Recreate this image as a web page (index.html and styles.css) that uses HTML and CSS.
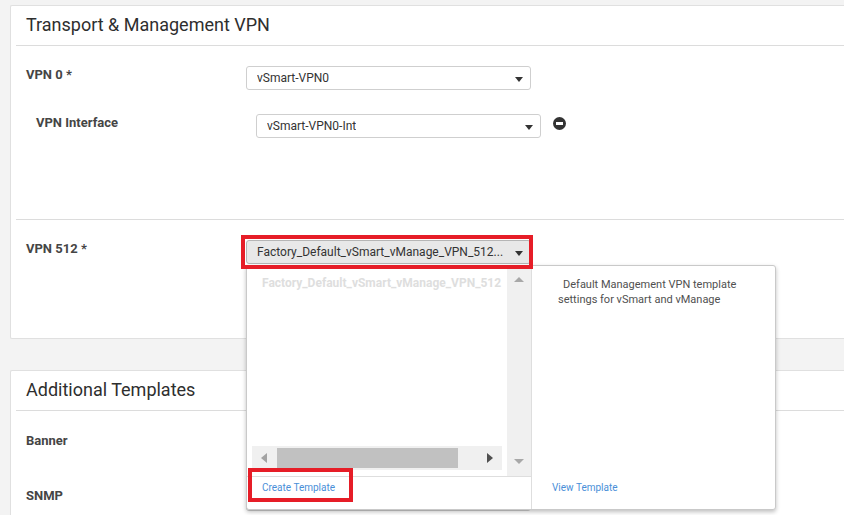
FILE: index.html
```html
<!DOCTYPE html>
<html lang="en">
<head>
<meta charset="utf-8">
<title>Transport &amp; Management VPN</title>
<link rel="stylesheet" href="styles.css">
</head>
<body>
<div class="page">
  <section class="card card-transport">
    <div class="card-head"><h2 class="card-title">Transport &amp; Management VPN</h2></div>
    <div class="card-body card-body-vpn0">
      <div class="field">
        <label class="field-label">VPN 0 *</label>
        <div class="select"><span class="select-value">vSmart-VPN0</span><span class="caret"></span></div>
      </div>
      <div class="field field-sub">
        <label class="field-label">VPN Interface</label>
        <div class="select"><span class="select-value">vSmart-VPN0-Int</span><span class="caret"></span></div>
        <span class="remove-btn"></span>
      </div>
    </div>
    <div class="card-body card-body-vpn512">
      <div class="field">
        <label class="field-label">VPN 512 *</label>
        <div class="select select-open"><span class="select-value">Factory_Default_vSmart_vManage_VPN_512...</span><span class="caret"></span></div>
      </div>
    </div>
  </section>

  <section class="card card-additional">
    <div class="card-head"><h2 class="card-title">Additional Templates</h2></div>
    <div class="card-body card-body-extra">
      <div class="field">
        <label class="field-label">Banner</label>
        <div class="select"><span class="caret"></span></div>
      </div>
      <div class="field">
        <label class="field-label">SNMP</label>
        <div class="select"><span class="caret"></span></div>
      </div>
    </div>
  </section>

  <div class="dropdown">
    <div class="dd-left">
      <div class="dd-list-wrap">
        <div class="dd-list">
          <div class="dd-item">Factory_Default_vSmart_vManage_VPN_512</div>
          <div class="hscroll">
            <span class="hs-btn"><span class="tri tri-left"></span></span>
            <span class="hs-track"><span class="hs-thumb"></span></span>
            <span class="hs-btn"><span class="tri tri-right"></span></span>
          </div>
        </div>
        <div class="vscroll">
          <span class="tri tri-up"></span>
          <span class="tri tri-down"></span>
        </div>
      </div>
      <div class="dd-foot"><a class="dd-link">Create Template</a></div>
    </div>
    <div class="dd-right">
      <p class="dd-desc">Default Management VPN template settings for vSmart and vManage</p>
      <div class="dd-foot-right"><a class="dd-link">View Template</a></div>
    </div>
  </div>

  <div class="highlight highlight-select"></div>
  <div class="highlight highlight-create"></div>
</div>
</body>
</html>
```

FILE: styles.css
```css
* { box-sizing: border-box; }

html, body {
  margin: 0;
  padding: 0;
  background: #f3f3f3;
}

body {
  font-family: Roboto, "Liberation Sans", Arial, sans-serif;
  color: #333;
  overflow: hidden;
}

.page {
  position: relative;
  width: 844px;
  height: 515px;
  overflow: hidden;
  padding: 5px 0 0 10px;
}

.card {
  background: #fff;
  border: 1px solid #e0e0e0;
  border-right: none;
  margin-right: -20px;
  border-radius: 2px 0 0 2px;
}

.card-additional {
  margin-top: 31px;
}

.card-head {
  height: 40px;
  margin-left: 5px;
  padding-left: 10px;
  border-bottom: 1px solid #dcdcdc;
}

.card-title {
  margin: 0;
  font-size: 18px;
  font-weight: 400;
  line-height: 38px;
  color: #2e2e2e;
}

.card-body {
  margin-left: 5px;
  padding-left: 10px;
}

.card-body-vpn0 {
  padding-top: 20px;
  padding-bottom: 81px;
}

.card-body-vpn512 {
  border-top: 1px solid #dcdcdc;
  padding-top: 20px;
  padding-bottom: 74px;
}

.card-body-extra {
  padding-top: 21px;
  padding-bottom: 40px;
}

.field {
  display: flex;
  align-items: flex-start;
  height: 24px;
}

.card-body-vpn0 .field-sub {
  margin-top: 24px;
  padding-left: 10px;
}

.card-body-extra .field + .field {
  margin-top: 31px;
}

.field-label {
  width: 220px;
  flex: none;
  font-size: 13px;
  font-weight: 700;
  color: #454545;
  line-height: 15px;
  padding-top: 1px;
}

.select {
  position: relative;
  width: 285px;
  height: 24px;
  flex: none;
  border: 1px solid #cfcfcf;
  border-radius: 3px;
  background: #fff;
  display: flex;
  align-items: center;
  padding: 0 26px 0 10px;
  font-size: 12px;
  color: #333;
}

.select-value {
  white-space: nowrap;
  overflow: hidden;
}

.select-open {
  background: #e8e8e8;
  border-color: #b5b5b5;
}

.caret {
  position: absolute;
  right: 7px;
  top: 10px;
  width: 0;
  height: 0;
  border-left: 4.5px solid transparent;
  border-right: 4.5px solid transparent;
  border-top: 5px solid #333;
}

.remove-btn {
  position: relative;
  width: 13px;
  height: 13px;
  margin: 3px 0 0 12px;
  border-radius: 50%;
  background: #333;
  flex: none;
}

.remove-btn::after {
  content: "";
  position: absolute;
  left: 3px;
  top: 5px;
  width: 7px;
  height: 3px;
  background: #fff;
}

/* dropdown overlay */
.dropdown {
  position: absolute;
  left: 246px;
  top: 265px;
  width: 530px;
  height: 245px;
  background: #fff;
  border: 1px solid #c9c9c9;
  border-radius: 3px;
  box-shadow: 0 2px 4px rgba(0, 0, 0, 0.25);
  display: flex;
}

.dd-left {
  width: 285px;
  flex: none;
  border-right: 1px solid #dedede;
  display: flex;
  flex-direction: column;
}

.dd-list-wrap {
  flex: 1;
  display: flex;
  min-height: 0;
}

.dd-list {
  flex: 1;
  display: flex;
  flex-direction: column;
  padding: 0 5px 6px 5px;
}

.dd-item {
  padding: 9px 0 0 10px;
  font-size: 12px;
  font-weight: 700;
  line-height: 16px;
  color: #dedede;
  white-space: nowrap;
  overflow: hidden;
}

.hscroll {
  margin-top: auto;
  height: 24px;
  background: #f0f0f0;
  display: flex;
  align-items: center;
}

.hs-btn {
  width: 24px;
  height: 24px;
  flex: none;
  display: flex;
  align-items: center;
  justify-content: center;
}

.hs-track {
  flex: 1;
  height: 100%;
  padding: 2px 20px 2px 1px;
  display: flex;
}

.hs-thumb {
  flex: 1;
  background: #c1c1c1;
}

.vscroll {
  width: 24px;
  flex: none;
  background: #f0f0f0;
  display: flex;
  flex-direction: column;
  align-items: center;
  justify-content: space-between;
  padding: 11px 0 12px;
}

.tri {
  display: block;
  width: 0;
  height: 0;
}

.tri-left {
  border-top: 5px solid transparent;
  border-bottom: 5px solid transparent;
  border-right: 6px solid #a3a3a3;
}

.tri-right {
  border-top: 5.5px solid transparent;
  border-bottom: 5.5px solid transparent;
  border-left: 6px solid #505050;
}

.tri-up {
  border-left: 5px solid transparent;
  border-right: 5px solid transparent;
  border-bottom: 5px solid #a8a8a8;
}

.tri-down {
  border-left: 5px solid transparent;
  border-right: 5px solid transparent;
  border-top: 5px solid #a8a8a8;
}

.dd-foot {
  height: 33px;
  flex: none;
  border-top: 1px solid #dedede;
  padding: 4px 0 0 15px;
  line-height: 14px;
}

.dd-link {
  display: block;
  font-size: 10px;
  line-height: 14px;
  color: #4a8fd8;
  cursor: pointer;
}

.dd-right {
  flex: 1;
  display: flex;
  flex-direction: column;
  padding: 0 14px 0 26px;
}

.dd-desc {
  margin: 0;
  padding-top: 11px;
  font-size: 11px;
  line-height: 15px;
  color: #505050;
  text-indent: 5px;
}

.dd-foot-right {
  margin-top: auto;
  height: 33px;
  padding: 5px 0 0 0;
  margin-left: -6px;
}

/* annotation boxes */
.highlight {
  position: absolute;
  border: 4px solid #e61d27;
  pointer-events: none;
}

.highlight-select {
  left: 241px;
  top: 235px;
  width: 292px;
  height: 34px;
}

.highlight-create {
  left: 248px;
  top: 468px;
  width: 105px;
  height: 34px;
}
```
